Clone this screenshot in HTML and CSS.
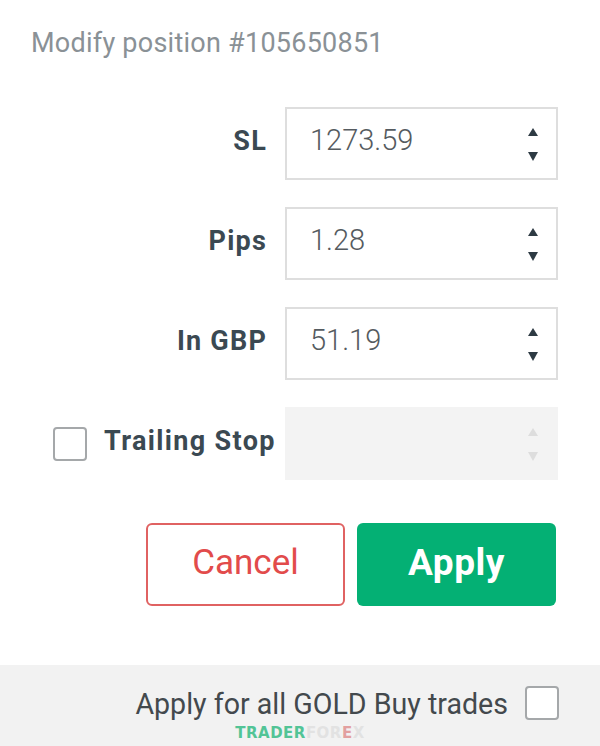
FILE: index.html
```html
<!DOCTYPE html>
<html>
<head>
<meta charset="utf-8">
<link rel="stylesheet" href="styles.css">
</head>
<body>
<div class="dialog">
  <div class="title">Modify position #105650851</div>
  <div class="form">
    <div class="label">SL</div>
    <div class="field">
      <span class="value">1273.59</span>
      <span class="spin"><i class="up"></i><i class="down"></i></span>
    </div>
    <div class="label">Pips</div>
    <div class="field">
      <span class="value">1.28</span>
      <span class="spin"><i class="up"></i><i class="down"></i></span>
    </div>
    <div class="label">In GBP</div>
    <div class="field">
      <span class="value">51.19</span>
      <span class="spin"><i class="up"></i><i class="down"></i></span>
    </div>
    <div class="label trailing">
      <span class="checkbox"></span>
      <span>Trailing Stop</span>
    </div>
    <div class="field disabled">
      <span class="value"></span>
      <span class="spin"><i class="up"></i><i class="down"></i></span>
    </div>
  </div>
  <div class="buttons">
    <button class="btn cancel">Cancel</button>
    <button class="btn apply">Apply</button>
  </div>
  <div class="footer">
    <div class="footer-row">
      <span class="footer-text">Apply for all GOLD Buy trades</span>
      <span class="checkbox"></span>
    </div>
    <div class="watermark"><span class="wm-green">TRADER</span><span class="wm-gray">FOR</span><span class="wm-e">E</span><span class="wm-gray">X</span></div>
  </div>
</div>
</body>
</html>
```

FILE: styles.css
```css
html, body {
  margin: 0;
  padding: 0;
  background: #ffffff;
}
body {
  font-family: Roboto, "Noto Sans", sans-serif;
  width: 600px;
  height: 746px;
  overflow: hidden;
}
.dialog {
  display: flex;
  flex-direction: column;
  height: 746px;
}
.title {
  padding: 27px 0 0 31px;
  font-size: 27px;
  line-height: 32px;
  letter-spacing: 0.25px;
  color: #8a9196;
  height: 32px;
}
.form {
  margin-top: 48px;
  display: grid;
  grid-template-columns: 267px 273px;
  grid-auto-rows: 73px;
  column-gap: 18px;
  row-gap: 27px;
}
.label {
  justify-self: end;
  align-self: center;
  font-size: 27px;
  font-weight: 700;
  color: #3b4952;
  letter-spacing: 1.2px;
  white-space: nowrap;
  padding-bottom: 6px;
}
.label.trailing {
  justify-self: start;
  display: flex;
  align-items: center;
  gap: 17px;
  padding-left: 53px;
  padding-bottom: 0;
  letter-spacing: 1.35px;
}
.label.trailing span:last-child {
  padding-bottom: 6px;
}
.field {
  box-sizing: border-box;
  border: 2px solid #dedede;
  display: flex;
  align-items: center;
  justify-content: space-between;
  padding: 0 18px 0 23px;
  background: #ffffff;
}
.field.disabled {
  border-color: #f3f3f3;
  background: #f3f3f3;
}
.value {
  font-size: 29px;
  font-weight: 300;
  color: #555b60;
  padding-bottom: 8px;
}
.spin {
  display: flex;
  flex-direction: column;
  gap: 16px;
  padding-top: 2px;
}
.spin i {
  display: block;
  width: 0;
  height: 0;
  border-left: 5px solid transparent;
  border-right: 5px solid transparent;
}
.spin .up {
  border-bottom: 8px solid #2d3a43;
}
.spin .down {
  border-top: 9px solid #2d3a43;
}
.disabled .spin .up {
  border-bottom-color: #dddddd;
}
.disabled .spin .down {
  border-top-color: #dddddd;
}
.checkbox {
  box-sizing: border-box;
  display: block;
  width: 34px;
  height: 34px;
  border: 2px solid #a5a8aa;
  border-radius: 4px;
  background: #ffffff;
  flex: none;
}
.buttons {
  margin-top: 43px;
  display: flex;
  justify-content: flex-end;
  gap: 12px;
  padding-right: 44px;
}
.btn {
  box-sizing: border-box;
  width: 199px;
  height: 83px;
  border-radius: 6px;
  font-family: Roboto, "Noto Sans", sans-serif;
  padding: 0 0 4px 0;
  cursor: pointer;
}
.cancel {
  background: #ffffff;
  border: 2px solid #e06262;
  color: #e24b4b;
  font-weight: 400;
  font-size: 35px;
}
.apply {
  background: #04b074;
  border: none;
  color: #ffffff;
  font-weight: 700;
  font-size: 37px;
  letter-spacing: 0.5px;
}
.footer {
  margin-top: 59px;
  flex: 1;
  background: #f2f2f2;
  display: flex;
  flex-direction: column;
}
.footer-row {
  display: flex;
  justify-content: flex-end;
  align-items: center;
  gap: 17px;
  padding: 21px 41px 0 0;
  height: 34px;
}
.footer-text {
  font-size: 28.6px;
  color: #43494d;
  padding-top: 2px;
}
.watermark {
  text-align: center;
  font-family: "DejaVu Sans", sans-serif;
  font-weight: 700;
  font-size: 15px;
  line-height: 16px;
  margin-top: 5px;
  letter-spacing: 0.5px;
}
.wm-green { color: #52c496; }
.wm-gray { color: #e2e2e2; }
.wm-e { color: #e2a0a0; }
```
